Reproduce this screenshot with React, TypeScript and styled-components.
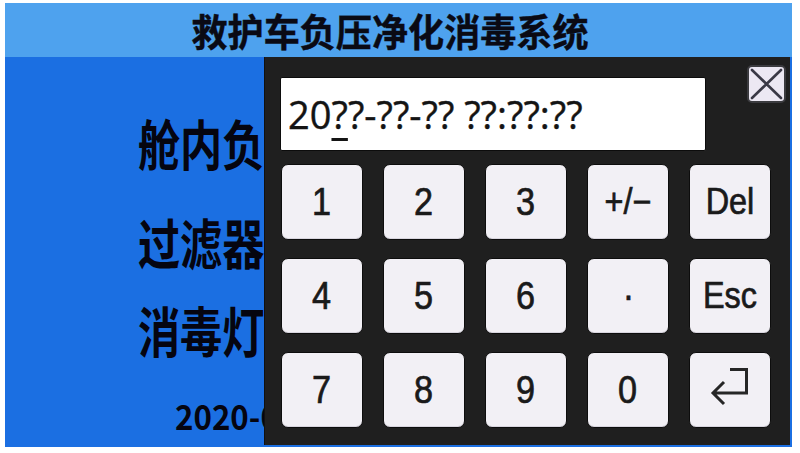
import React from "react";
import styled, { createGlobalStyle } from "styled-components";

const Global = createGlobalStyle`
  html, body { margin: 0; padding: 0; background: #ffffff; }
  body { font-family: "Noto Sans CJK SC", "Noto Sans", sans-serif; }
`;

const Screen = styled.div`
  margin: 3px 8px 6px 5px;
  height: 444px;
  display: flex;
  flex-direction: column;
  background: #1b6fe2;
  overflow: hidden;
`;

const Header = styled.header`
  height: 54px;
  flex: none;
  background: #4ea2ee;
  display: flex;
  align-items: center;
  justify-content: center;
  padding-right: 16px;
`;

const Squeeze = styled.span<{ $sx: number; $origin?: string }>`
  display: inline-block;
  white-space: nowrap;
  transform: scaleX(${(p) => p.$sx});
  transform-origin: ${(p) => p.$origin ?? "center"};
`;

const Title = styled.h1`
  margin: 0;
  font-family: "Noto Sans CJK SC", sans-serif;
  font-weight: 700;
  font-size: 38px;
  line-height: 1;
  color: #0a0a14;
  -webkit-text-stroke: 0.4px #0a0a14;
`;

const Main = styled.main`
  position: relative;
  flex: 1;
  display: flex;
`;

const Status = styled.div`
  width: 260px;
  overflow: hidden;
  display: flex;
  flex-direction: column;
`;

const Row = styled.div<{ $mt: number; $pl: number; $size: number; $h: number }>`
  margin-top: ${(p) => p.$mt}px;
  padding-left: ${(p) => p.$pl}px;
  height: ${(p) => p.$h}px;
  display: flex;
  align-items: center;
  font-family: "Noto Sans CJK SC", sans-serif;
  font-weight: 700;
  font-size: ${(p) => p.$size}px;
  color: #050510;
`;

const Panel = styled.section`
  position: absolute;
  left: 260px;
  top: 0;
  width: 525px;
  height: 388px;
  background: #1f1f1f;
  box-shadow: -1px 0 0 #111;
  display: flex;
  flex-direction: column;
`;

const TopRow = styled.div`
  display: flex;
  align-items: flex-start;
  padding: 8px 4px 0 15px;
`;

const Field = styled.div`
  margin-top: 12px;
  width: 426px;
  height: 74px;
  box-sizing: border-box;
  background: #ffffff;
  border: 1px solid #0c0c0c;
  border-radius: 2px;
  display: flex;
  align-items: center;
  padding-left: 7px;
  font-family: "Open Sans", sans-serif;
  font-size: 38px;
  color: #141414;
  -webkit-text-stroke: 0.4px #141414;
`;

const Cursor = styled.span`
  display: inline-block;
  text-decoration: underline;
  text-decoration-thickness: 3px;
  text-underline-offset: 9px;
`;

const Close = styled.button`
  margin-left: auto;
  width: 39px;
  height: 38px;
  padding: 0;
  box-sizing: border-box;
  background: #ece8f3;
  border: 2px solid #3b3b3f;
  border-radius: 5px;
  display: flex;
  align-items: center;
  justify-content: center;
`;

const Keypad = styled.div`
  margin-top: 13px;
  padding-left: 16px;
  display: grid;
  grid-template-columns: repeat(5, 82px);
  grid-auto-rows: 76px;
  column-gap: 20px;
  row-gap: 18px;
`;

const Key = styled.button<{ $size?: number }>`
  padding: 0;
  background: #f2f0f5;
  border: 1px solid #0d0d0d;
  border-radius: 7px;
  box-shadow: inset 0 -1px 0 #d8d5de;
  display: flex;
  align-items: center;
  justify-content: center;
  font-family: "Liberation Sans", Arial, sans-serif;
  font-size: ${(p) => p.$size ?? 38}px;
  color: #1a1a1a;
  -webkit-text-stroke: 0.7px #1a1a1a;
`;

const EnterIcon = styled.svg`
  margin-bottom: 6px;
`;

const keys: string[] = ["1", "2", "3", "+/\u2212", "Del", "4", "5", "6", "\u00b7", "Esc", "7", "8", "9", "0", "enter"];

export default function App() {
  return (
    <>
      <Global />
      <Screen>
        <Header>
          <Title>
            <Squeeze $sx={0.95}>救护车负压净化消毒系统</Squeeze>
          </Title>
        </Header>
        <Main>
          <Status>
            <Row $mt={55} $pl={133} $size={54} $h={60}>
              <Squeeze $sx={0.78} $origin="left">舱内负</Squeeze>
            </Row>
            <Row $mt={39} $pl={133} $size={54} $h={60}>
              <Squeeze $sx={0.78} $origin="left">过滤器</Squeeze>
            </Row>
            <Row $mt={28} $pl={133} $size={54} $h={60}>
              <Squeeze $sx={0.78} $origin="left">消毒灯</Squeeze>
            </Row>
            <Row $mt={36} $pl={170} $size={34} $h={40}>
              <Squeeze $sx={0.92} $origin="left">2020-0</Squeeze>
            </Row>
          </Status>
          <Panel>
            <TopRow>
              <Field>
                <Squeeze $sx={1} $origin="left">
                  20<Cursor>?</Cursor>?-??-?? ??:??:??
                </Squeeze>
              </Field>
              <Close aria-label="close">
                <svg width="35" height="34" viewBox="0 0 35 34">
                  <path d="M3 3 L32 31 M32 3 L3 31" stroke="#3a3946" strokeWidth="2.6" strokeLinecap="round" />
                </svg>
              </Close>
            </TopRow>
            <Keypad>
              {keys.map((k) =>
                k === "enter" ? (
                  <Key key={k}>
                    <EnterIcon width="40" height="40" viewBox="0 0 40 40">
                      <path
                        d="M20 2.5 H36.5 V26 H4 M14 15 L3 26 L14 37"
                        fill="none"
                        stroke="#262626"
                        strokeWidth="3"
                        strokeLinejoin="miter"
                      />
                    </EnterIcon>
                  </Key>
                ) : (
                  <Key key={k} $size={k.length > 1 ? 36 : 38}>
                    <Squeeze $sx={0.9}>{k}</Squeeze>
                  </Key>
                )
              )}
            </Keypad>
          </Panel>
        </Main>
      </Screen>
    </>
  );
}
